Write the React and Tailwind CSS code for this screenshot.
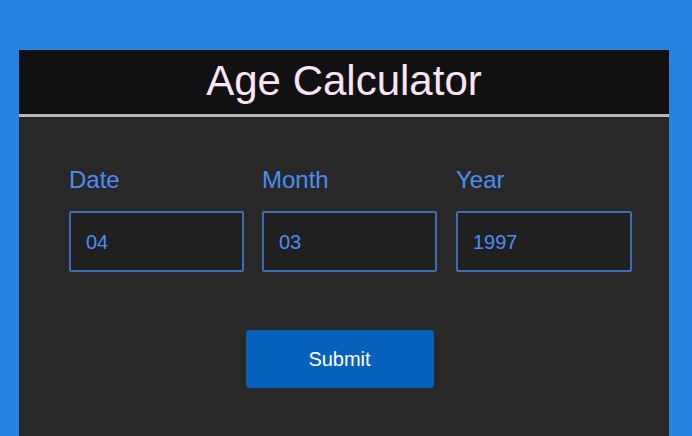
export default function App() {
  const fields = [
    { label: "Date", value: "04", cls: "w-[175px]" },
    { label: "Month", value: "03", cls: "w-[175px] ml-[18px]" },
    { label: "Year", value: "1997", cls: "w-[176px] ml-[19px]" },
  ];
  return (
    <div
      className="w-[692px] h-[436px] overflow-hidden bg-[#2882e1] pt-[50px] px-[19px]"
      style={{ fontFamily: '"Liberation Sans", Arial, sans-serif' }}
    >
      <div className="w-[650px] h-[400px] bg-[#282828]">
        <div className="h-[67px] bg-[#111111] border-b-[3px] border-[#b8b8b8] flex justify-center">
          <h1 className="text-[42px] leading-[64px] text-[#fde3f8] mt-[-1px]">Age Calculator</h1>
        </div>
        <div className="pl-[50px] pt-[49px] flex">
          {fields.map((f) => (
            <div key={f.label} className={"flex flex-col " + f.cls}>
              <label className="text-[24px] leading-[28px] text-[#4a8ef0]">{f.label}</label>
              <div className="mt-[17px] h-[61px] border-2 border-[#3a6db5] rounded-[2px] bg-[#202020] flex items-center pl-[15px] text-[20px] text-[#4a8ef0]">
                {f.value}
              </div>
            </div>
          ))}
        </div>
        <div className="flex justify-center mt-[58px] pr-[9px]">
          <button className="w-[188px] h-[58px] bg-[#0561b9] rounded-[3px] text-white text-[20px]">
            Submit
          </button>
        </div>
      </div>
    </div>
  );
}
